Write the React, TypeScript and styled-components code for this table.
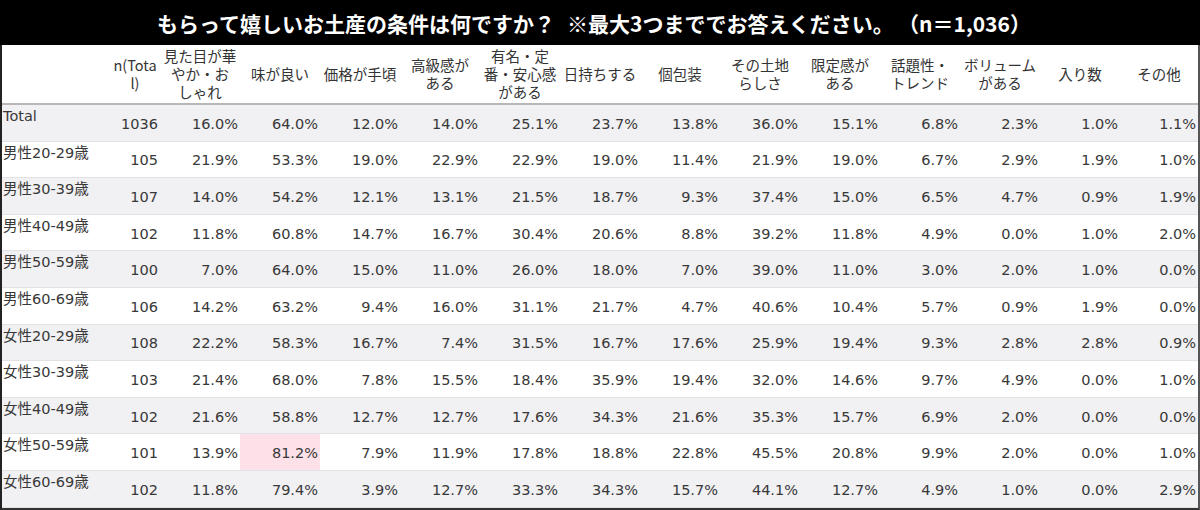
import React from "react";
import styled, { createGlobalStyle } from "styled-components";

const GlobalStyle = createGlobalStyle`
  html, body { margin: 0; padding: 0; background: #ffffff; }
  * { box-sizing: border-box; }
`;

const Page = styled.div`
  width: 1200px;
  height: 510px;
  overflow: hidden;
  background: #ffffff;
  font-family: "DejaVu Sans", "Noto Sans CJK JP", sans-serif;
  color: #383838;
`;

const TitleBar = styled.div`
  height: 45px;
  background: #000000;
  color: #ffffff;
  display: flex;
  align-items: center;
  justify-content: center;
  gap: 12px;
  font-family: "Noto Sans CJK JP", sans-serif;
  font-weight: 700;
  font-size: 21px;
  padding-right: 12px;
  white-space: nowrap;
`;

const Table = styled.div`
  width: 1200px;
  border-left: 2px solid #222222;
  border-right: 2px solid #555555;
  border-bottom: 2px solid #333333;
`;

const COLS = "108px 50px repeat(12, 80px) 78px";

const HeaderRow = styled.div`
  display: grid;
  grid-template-columns: ${COLS};
  height: 60px;
  border-bottom: 2px solid #b8b8b8;
`;

const HeaderCell = styled.div`
  display: flex;
  align-items: center;
  justify-content: center;
  text-align: center;
  font-family: "Noto Sans CJK JP", sans-serif;
  font-size: 14.5px;
  line-height: 18px;
  white-space: nowrap;
  color: #333333;
`;

const HeaderLine = styled.div`
  height: 18px;
  line-height: 18px;
`;

const Row = styled.div<{ $alt: boolean }>`
  display: grid;
  grid-template-columns: ${COLS};
  height: 36.6px;
  background: ${(p) => (p.$alt ? "#f1f0f3" : "#ffffff")};
  border-bottom: 1px solid #e2e2e4;
`;

const LabelCell = styled.div`
  font-size: 14.5px;
  line-height: 18px;
  padding: 2px 0 0 1px;
  white-space: nowrap;
`;

const NumCell = styled.div<{ $hl?: boolean }>`
  display: flex;
  align-items: center;
  justify-content: flex-end;
  padding-right: 2px;
  padding-top: 2px;
  font-size: 14.5px;
  background: ${(p) => (p.$hl ? "#fde1e8" : "transparent")};
`;

const headers: string[][] = [
  [""],
  ["n(Tota", "l)"],
  ["見た目が華", "やか・お", "しゃれ"],
  ["味が良い"],
  ["価格が手頃"],
  ["高級感が", "ある"],
  ["有名・定", "番・安心感", "がある"],
  ["日持ちする"],
  ["個包装"],
  ["その土地", "らしさ"],
  ["限定感が", "ある"],
  ["話題性・", "トレンド"],
  ["ボリューム", "がある"],
  ["入り数"],
  ["その他"],
];

const rows: [string, string, string[]][] = [
  ["Total", "1036", ["16.0", "64.0", "12.0", "14.0", "25.1", "23.7", "13.8", "36.0", "15.1", "6.8", "2.3", "1.0", "1.1"]],
  ["男性20-29歳", "105", ["21.9", "53.3", "19.0", "22.9", "22.9", "19.0", "11.4", "21.9", "19.0", "6.7", "2.9", "1.9", "1.0"]],
  ["男性30-39歳", "107", ["14.0", "54.2", "12.1", "13.1", "21.5", "18.7", "9.3", "37.4", "15.0", "6.5", "4.7", "0.9", "1.9"]],
  ["男性40-49歳", "102", ["11.8", "60.8", "14.7", "16.7", "30.4", "20.6", "8.8", "39.2", "11.8", "4.9", "0.0", "1.0", "2.0"]],
  ["男性50-59歳", "100", ["7.0", "64.0", "15.0", "11.0", "26.0", "18.0", "7.0", "39.0", "11.0", "3.0", "2.0", "1.0", "0.0"]],
  ["男性60-69歳", "106", ["14.2", "63.2", "9.4", "16.0", "31.1", "21.7", "4.7", "40.6", "10.4", "5.7", "0.9", "1.9", "0.0"]],
  ["女性20-29歳", "108", ["22.2", "58.3", "16.7", "7.4", "31.5", "16.7", "17.6", "25.9", "19.4", "9.3", "2.8", "2.8", "0.9"]],
  ["女性30-39歳", "103", ["21.4", "68.0", "7.8", "15.5", "18.4", "35.9", "19.4", "32.0", "14.6", "9.7", "4.9", "0.0", "1.0"]],
  ["女性40-49歳", "102", ["21.6", "58.8", "12.7", "12.7", "17.6", "34.3", "21.6", "35.3", "15.7", "6.9", "2.0", "0.0", "0.0"]],
  ["女性50-59歳", "101", ["13.9", "81.2", "7.9", "11.9", "17.8", "18.8", "22.8", "45.5", "20.8", "9.9", "2.0", "0.0", "1.0"]],
  ["女性60-69歳", "102", ["11.8", "79.4", "3.9", "12.7", "33.3", "34.3", "15.7", "44.1", "12.7", "4.9", "1.0", "0.0", "2.9"]],
];

export default function App() {
  return (
    <Page>
      <GlobalStyle />
      <TitleBar>
        <span>もらって嬉しいお土産の条件は何ですか？</span>
        <span>※最大3つまででお答えください。{"\u2009"}（n＝1,036）</span>
      </TitleBar>
      <Table>
        <HeaderRow>
          {headers.map((lines, i) => (
            <HeaderCell key={i}>
              <div>
                {lines.map((l, j) => (
                  <HeaderLine key={j}>{l}</HeaderLine>
                ))}
              </div>
            </HeaderCell>
          ))}
        </HeaderRow>
        {rows.map(([label, n, vals], ri) => (
          <Row key={label} $alt={ri % 2 === 0}>
            <LabelCell>{label}</LabelCell>
            <NumCell>{n}</NumCell>
            {vals.map((v, ci) => (
              <NumCell key={ci} $hl={ri === 9 && ci === 1}>
                {v}%
              </NumCell>
            ))}
          </Row>
        ))}
      </Table>
    </Page>
  );
}
